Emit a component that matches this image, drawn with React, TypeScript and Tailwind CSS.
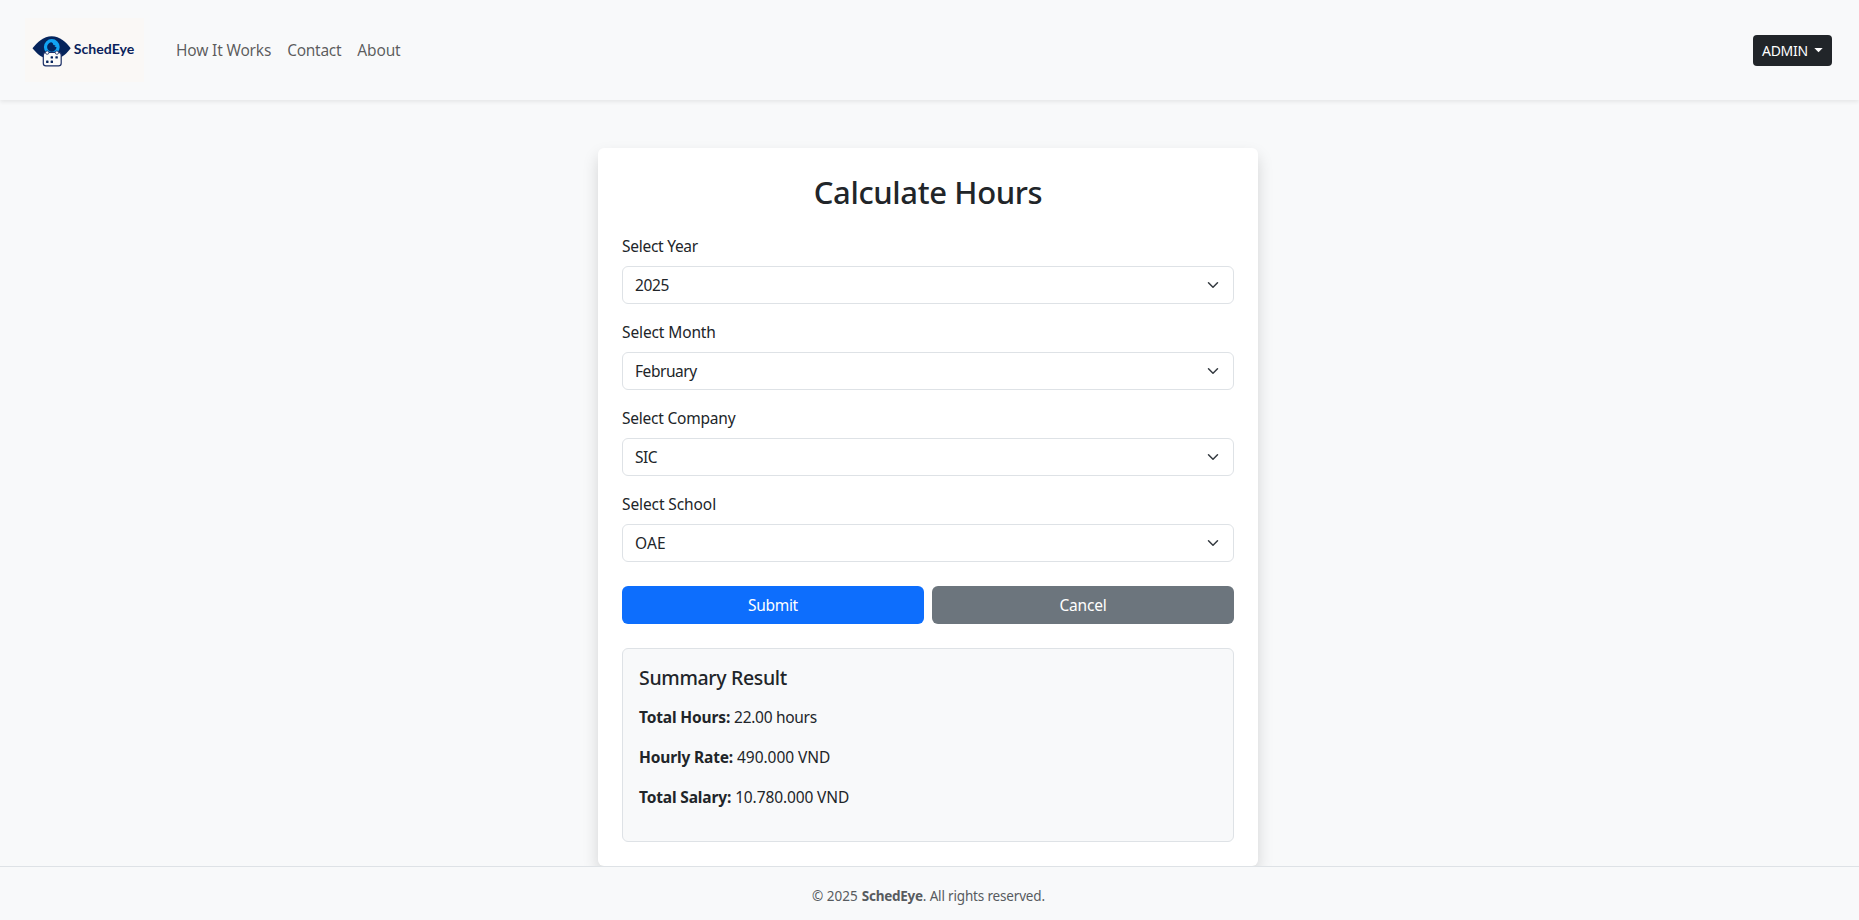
import type { ReactNode } from "react";

function Logo() {
  return (
    <svg width="120" height="64" viewBox="25 18 120 64" role="img" aria-label="SchedEye">
      <rect x="25" y="18" width="119" height="64" fill="#faf8f6" />
      <path d="M32.5 48.2C37.5 42 43.5 36.2 51.7 36.2S66 42 70.7 48.2C67 53 62.5 57.6 56 58.8H47.500C41 57.600 36.500 53 32.500 48.200Z" fill="#05245c" />
      <circle cx="51.8" cy="47" r="6.300" fill="#05245c" stroke="#12a4f4" strokeWidth="3.200" />
      <path d="M51 40.500A6.500 6.500 0 0 1 58.300 47.500L55 46.800L52.800 44.800Z" fill="#12a4f4" />
      <path d="M52.600 42.600L53.400 44.900L55.600 45.500L53.800 47L51 46Z" fill="#05245c" />
      <rect x="43.300" y="52.300" width="17.900" height="13.500" rx="2.600" fill="#fbfaf9" stroke="#1b2f66" strokeWidth="1.200" />
      <circle cx="47.200" cy="52.600" r="1.700" fill="#fbfaf9" stroke="#1b2f66" strokeWidth="0.800" />
      <circle cx="56.900" cy="52.600" r="1.700" fill="#fbfaf9" stroke="#1b2f66" strokeWidth="0.800" />
      <g fill="#05245c">
        <rect x="50.600" y="56.200" width="2.400" height="2.400" rx="0.500" />
        <rect x="55.400" y="56.200" width="2.400" height="2.400" rx="0.500" />
        <rect x="46.100" y="60.600" width="2.400" height="2.400" rx="0.500" />
        <rect x="50.600" y="60.600" width="2.400" height="2.400" rx="0.500" />
      </g>
      <text x="73.800" y="53.600" textLength="60.500" lengthAdjust="spacingAndGlyphs" className="fill-[#0b1f5c] font-['Lato',sans-serif] text-[14px] font-bold">
        SchedEye
      </text>
    </svg>
  );
}

function Field({ label, value, labelClass, valueClass }: { label: string; value: string; labelClass: string; valueClass: string }) {
  return (
    <div className="flex flex-col gap-2">
      <span className={`h-6 leading-6 ${labelClass}`}>{label}</span>
      <button type="button" className="flex h-[38px] items-center justify-between rounded-md border border-[#dee2e6] bg-white px-3">
        <span className={`leading-6 ${valueClass}`}>{value}</span>
        <svg width="16" height="12" viewBox="0 0 16 16" fill="none" stroke="#343a40" strokeWidth="2" strokeLinecap="round" strokeLinejoin="round">
          <path d="m2 5 6 6 6-6" />
        </svg>
      </button>
    </div>
  );
}

function Line({ label, labelClass, children }: { label: string; labelClass: string; children: ReactNode }) {
  return (
    <p className="mb-4 flex h-6 gap-[4px] leading-6">
      <strong className={labelClass}>{label}</strong>
      {children}
    </p>
  );
}

export default function App() {
  return (
    <div className="flex h-[920px] flex-col overflow-hidden bg-[#f8f9fa] font-['Noto_Sans',sans-serif] text-[15.5px] text-[#212529]">
      <header className="z-10 flex h-[100px] shrink-0 items-center justify-between bg-[#f8f9fa] pr-[27px] pl-[25px] shadow-[0_2px_4px_rgba(0,0,0,0.075)]">
        <div className="flex items-center">
          <Logo />
          <nav className="ml-[31px] flex gap-4 leading-6 text-black/65">
            <a className="tracking-[-0.170px]">How It Works</a>
            <a className="tracking-[-0.280px]">Contact</a>
            <a className="tracking-[-0.150px]">About</a>
          </nav>
        </div>
        <button type="button" className="flex h-[31px] w-[79px] items-center justify-between rounded bg-[#212529] px-[9px] text-[14px] text-white">
          <span className="tracking-[-0.300px]">ADMIN</span>
          <svg width="9" height="5" viewBox="0 0 9 5">
            <path d="M0.300 0h8.400l-4.200 4.200z" fill="white" />
          </svg>
        </button>
      </header>

      <main className="flex min-h-0 flex-1 items-start justify-center pt-12">
        <section className="mr-[3px] flex h-[718px] w-[660px] flex-col rounded-md bg-white p-6 shadow-[0_8px_16px_rgba(0,0,0,0.15)]">
          <h2 className="mb-6 h-[38.4px] text-center text-[31px] leading-[40.4px] font-medium tracking-[-0.370px]">Calculate Hours</h2>
          <div className="flex flex-col gap-4">
            <Field label="Select Year" value="2025" labelClass="tracking-[-0.270px]" valueClass="tracking-[-0.350px]" />
            <Field label="Select Month" value="February" labelClass="tracking-[-0.120px]" valueClass="tracking-[-0.450px]" />
            <Field label="Select Company" value="SIC" labelClass="tracking-[-0.220px]" valueClass="tracking-[-0.500px]" />
            <Field label="Select School" value="OAE" labelClass="tracking-[-0.100px]" valueClass="tracking-[0.150px]" />
          </div>
          <div className="mt-6 grid grid-cols-2 gap-2 leading-6 text-white">
            <button type="button" className="h-[38px] rounded-md bg-[#0d6efd] tracking-[-0.320px]">Submit</button>
            <button type="button" className="h-[38px] rounded-md bg-[#6c757d] tracking-[-0.200px]">Cancel</button>
          </div>
          <div className="mt-6 h-[194px] rounded-md border border-[#dee2e6] bg-[#f8f9fa] p-4">
            <h5 className="mb-4 h-6 text-[19.5px] leading-[26px] font-medium tracking-[-0.340px]">Summary Result</h5>
            <Line label="Total Hours:" labelClass="tracking-[-0.150px]">
              <span className="tracking-[-0.300px]">22.00 hours</span>
            </Line>
            <Line label="Hourly Rate:" labelClass="tracking-[-0.150px]">
              <span className="tracking-[-0.050px]">490.000 VND</span>
            </Line>
            <Line label="Total Salary:" labelClass="tracking-[-0.150px]">
              <span className="tracking-[-0.120px]">10.780.000 VND</span>
            </Line>
          </div>
        </section>
      </main>

      <footer className="z-10 flex h-[54px] shrink-0 items-center justify-center border-t border-[#dee2e6] bg-[#f8f9fa] pt-1.5 pr-[2px] text-[13.5px] text-[#575b5f]">
        <span className="mr-1">© 2025</span>
        <strong className="tracking-[-0.250px]">SchedEye</strong>
        <span className="tracking-[-0.170px]">. All rights reserved.</span>
      </footer>
    </div>
  );
}
